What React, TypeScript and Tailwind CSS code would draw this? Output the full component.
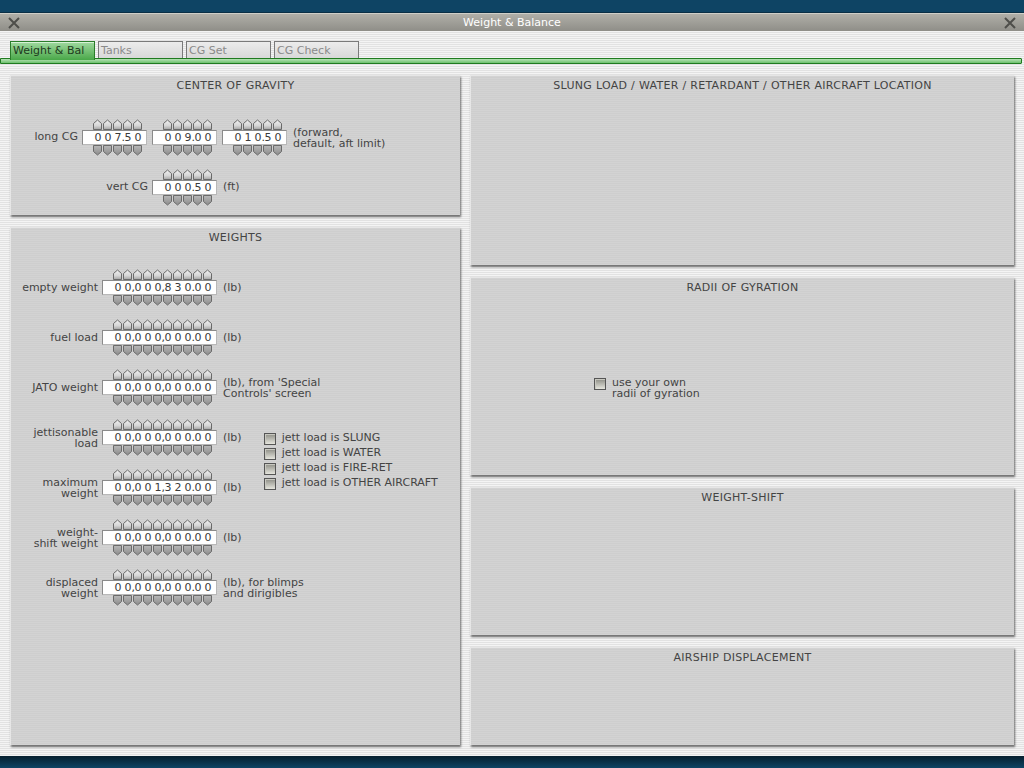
import React from 'react';

const STRIPES = 'bg-[repeating-linear-gradient(0deg,#f4f4f4_0px,#f4f4f4_1px,#e2e2e2_1px,#e2e2e2_2px)]';
const PANEL = 'bg-[repeating-linear-gradient(0deg,#d3d3d3_0px,#d3d3d3_1px,#cecece_1px,#cecece_2px)] shadow-[1px_2px_2px_rgba(0,0,0,0.55)] border-t border-l border-[#e6e6e6]';

function Arrow({ down }: { down?: boolean }) {
  return (
    <svg width="10" height="11" viewBox="0 0 10 11" className="block">
      <defs>
        <linearGradient id="au" x1="0" y1="0" x2="0" y2="1">
          <stop offset="0" stopColor="#f0f0f0" />
          <stop offset="0.6" stopColor="#d6d6d6" />
          <stop offset="1" stopColor="#a4a4a4" />
        </linearGradient>
        <linearGradient id="ad" x1="0" y1="0" x2="0" y2="1">
          <stop offset="0" stopColor="#b8b8b8" />
          <stop offset="1" stopColor="#8c8c8c" />
        </linearGradient>
      </defs>
      {down ? (
        <path d="M0.5 0.5 H8.5 V6.5 L4.5 10 L0.5 6.5 Z" fill="url(#ad)" stroke="#6a6a6a" strokeWidth="1" />
      ) : (
        <path d="M0.5 10.5 V4.5 L4.5 1 L8.5 4.5 V10.5 Z" fill="url(#au)" stroke="#6a6a6a" strokeWidth="1" />
      )}
    </svg>
  );
}

function Spinner({ value }: { value: string }) {
  const cells: { d: string; sep?: string }[] = [];
  for (const ch of value) {
    if (ch === ',' || ch === '.') cells[cells.length - 1].sep = ch;
    else cells.push({ d: ch });
  }
  const w = cells.length * 10 + 15;
  return (
    <div className="flex flex-col" style={{ width: w }}>
      <div className="flex ml-[11px] h-[11px]">
        {cells.map((_, i) => <Arrow key={i} />)}
      </div>
      <div className="h-[15px] bg-white border border-[#8a8a8a] border-b-[#b8b8b8] border-r-[#b8b8b8] flex items-center pl-[10px] text-[#3a3a3a] leading-none">
        {cells.map((c, i) => (
          <span key={i} className="relative w-[10px] text-center">
            {c.d}
            {c.sep && <span className="absolute right-[-2px] top-0">{c.sep}</span>}
          </span>
        ))}
      </div>
      <div className="flex ml-[11px] h-[11px]">
        {cells.map((_, i) => <Arrow key={i} down />)}
      </div>
    </div>
  );
}

function Check({ label }: { label: React.ReactNode }) {
  return (
    <div className="flex items-start gap-[6px]">
      <div className="w-[12px] h-[12px] mt-[1px] border border-[#555] bg-gradient-to-b from-[#8e8e86] to-[#e6e6de] shadow-[inset_1px_1px_0_#c8c8c0]" />
      <div className="leading-[11px] text-[#444]">{label}</div>
    </div>
  );
}

function Panel({ title, className, children }: { title: string; className: string; children?: React.ReactNode }) {
  return (
    <div className={`${PANEL} ${className} flex flex-col`}>
      <div className="pt-[3px] leading-[13px] text-center text-[#444] tracking-[0.3px]">{title}</div>
      {children}
    </div>
  );
}

function WeightRow({ label, value, unit, extra }: { label: React.ReactNode; value: string; unit: React.ReactNode; extra?: React.ReactNode }) {
  return (
    <div className="flex items-center">
      <div className="w-[87px] text-right leading-[11px] text-[#444]">{label}</div>
      <div className="ml-[4px]"><Spinner value={value} /></div>
      <div className="ml-[6px] leading-[11px] text-[#444]">{unit}</div>
      {extra}
    </div>
  );
}

function XIcon() {
  return (
    <svg width="14" height="14" viewBox="0 0 14 14">
      <path d="M2 2 L12 12 M12 2 L2 12" stroke="#4e4e4a" strokeWidth="2" />
    </svg>
  );
}

export default function App() {
  const zero = '00,000,000.00';
  return (
    <div className="w-[1024px] h-[768px] flex flex-col overflow-hidden font-['DejaVu_Sans',sans-serif] text-[11px]">
      <div className="h-[13px] bg-[#0e4464] border-b border-[#0a2f45]" />
      <div className="h-[18px] bg-gradient-to-b from-[#b0afa8] to-[#8f8e88] border-t border-[#cfcfc8] flex items-center justify-between px-[7px] text-white">
        <XIcon />
        <span className="leading-none">Weight &amp; Balance</span>
        <XIcon />
      </div>
      <div className={`flex-1 ${STRIPES} flex flex-col pt-[10px]`}>
        <div className="flex h-[17px] pl-[10px] gap-[3px]">
          <div className="w-[85px] h-[19px] relative z-10 bg-gradient-to-b from-[#9fd99f] to-[#48a848] border border-b-0 border-[#2a7d2a] shadow-[inset_0_1px_0_#d6f2d6] pl-[2px] pt-[3px] text-[#1e3a1e] leading-[12px]">Weight &amp; Bal</div>
          {['Tanks', 'CG Set', 'CG Check'].map(t => (
            <div key={t} className="w-[85px] h-[17px] bg-gradient-to-b from-[#ececec] to-[#d8d8d8] border border-b-0 border-[#7a7a7a] pl-[2px] pt-[3px] text-[#8a8a8a] leading-[12px]">{t}</div>
          ))}
        </div>
        <div className="h-[6px] mr-[2px] bg-gradient-to-b from-[#b6e2b6] to-[#6cc06c] border border-[#1f7a1f] rounded-r-[1px]" />
        <div className="flex gap-[10px] px-[10px] mt-[11px]">
          <div className="w-[450px] flex flex-col gap-[12px]">
            <Panel title="CENTER OF GRAVITY" className="h-[140px]">
              <div className="flex items-center mt-[27px]">
                <div className="w-[67px] text-right text-[#444]">long CG</div>
                <div className="ml-[4px] flex gap-[5px]">
                  <Spinner value="007.50" />
                  <Spinner value="009.00" />
                  <Spinner value="010.50" />
                </div>
                <div className="ml-[6px] leading-[11px] text-[#444]">(forward,<br />default, aft limit)</div>
              </div>
              <div className="flex items-center mt-[13px]">
                <div className="w-[137px] text-right text-[#444]">vert CG</div>
                <div className="ml-[4px]"><Spinner value="000.50" /></div>
                <div className="ml-[6px] text-[#444]">(ft)</div>
              </div>
            </Panel>
            <Panel title="WEIGHTS" className="h-[518px]">
              <div className="flex flex-col gap-[13px] mt-[25px]">
                <WeightRow label="empty weight" value="00,000,830.00" unit="(lb)" />
                <WeightRow label="fuel load" value={zero} unit="(lb)" />
                <WeightRow label="JATO weight" value={zero} unit={<>(lb), from 'Special<br />Controls' screen</>} />
                <WeightRow
                  label={<>jettisonable<br />load</>}
                  value={zero}
                  unit="(lb)"
                  extra={
                    <div className="ml-[22px] h-[15px] relative z-10">
                      <div className="flex flex-col gap-[2px] mt-[2px]">
                        <Check label="jett load is SLUNG" />
                        <Check label="jett load is WATER" />
                        <Check label="jett load is FIRE-RET" />
                        <Check label="jett load is OTHER AIRCRAFT" />
                      </div>
                    </div>
                  }
                />
                <WeightRow label={<>maximum<br />weight</>} value="00,001,320.00" unit="(lb)" />
                <WeightRow label={<>weight-<br />shift weight</>} value={zero} unit="(lb)" />
                <WeightRow label={<>displaced<br />weight</>} value={zero} unit={<>(lb), for blimps<br />and dirigibles</>} />
              </div>
            </Panel>
          </div>
          <div className="w-[544px] flex flex-col gap-[12px]">
            <Panel title="SLUNG LOAD / WATER / RETARDANT / OTHER AIRCRAFT LOCATION" className="h-[190px]" />
            <Panel title="RADII OF GYRATION" className="h-[198px]">
              <div className="mt-[83px] pl-[123px]">
                <Check label={<>use your own<br />radii of gyration</>} />
              </div>
            </Panel>
            <Panel title="WEIGHT-SHIFT" className="h-[148px]" />
            <Panel title="AIRSHIP DISPLACEMENT" className="h-[98px]" />
          </div>
        </div>
      </div>
      <div className="h-[12px] bg-gradient-to-b from-[#06202f] to-[#0e4464]" />
    </div>
  );
}
